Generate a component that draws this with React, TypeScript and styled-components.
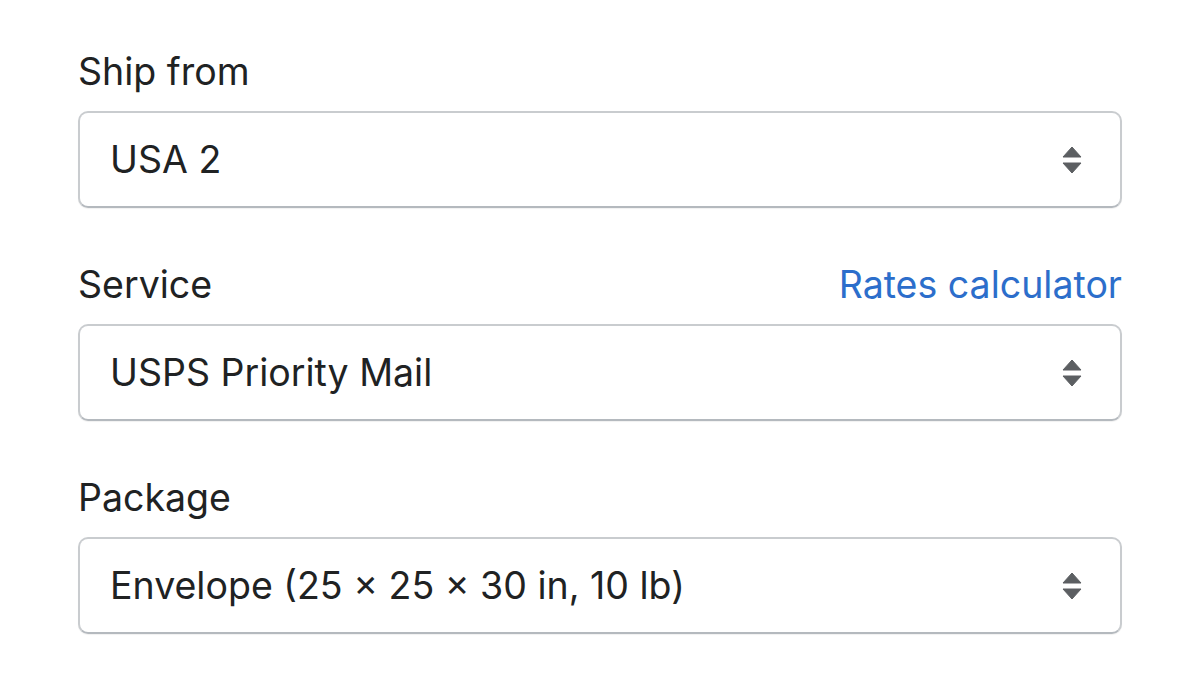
import React from 'react';
import styled, {createGlobalStyle} from "styled-components";

const GlobalStyle = createGlobalStyle`
    html, body {
        margin: 0;
        padding: 0;
        background: #ffffff;
    }
    body {
        font-family: Inter, "Noto Sans", "Liberation Sans", sans-serif;
        color: #202223;
    }
`

const Page = styled.div`
    width: 1200px;
    height: 675px;
    box-sizing: border-box;
    padding: 48px 78px 0 78px;
`

const Form = styled.div`
    display: flex;
    flex-direction: column;
    row-gap: 53px;
`

const Field = styled.div`
    display: flex;
    flex-direction: column;
    row-gap: 15px;
`

const LabelRow = styled.div`
    display: flex;
    justify-content: space-between;
    align-items: center;
    height: 48px;
`

const Label = styled.label`
    font-size: 37.5px;
    line-height: 48px;
    color: #202223;
`

const LinkButton = styled.a`
    font-size: 37.5px;
    line-height: 48px;
    color: #2c6ecb;
    text-decoration: none;
    cursor: pointer;
`

const SelectBox = styled.div`
    height: 97px;
    box-sizing: border-box;
    display: flex;
    align-items: center;
    justify-content: space-between;
    padding: 0 38px 0 30px;
    border: 2px solid #c9cccf;
    border-bottom-color: #b4b9be;
    border-radius: 10px;
    background: #ffffff;
    box-shadow: 0 1px 1px rgba(0, 0, 0, 0.06);
    cursor: pointer;
`

const Value = styled.span`
    font-size: 37.5px;
    color: #202223;
`

const ArrowsIcon = () => (
  <svg width="20" height="28" viewBox="0 0 20 28">
    <path d="M10 1 L19 11 L1 11 Z" fill="#5c5f62" stroke="#5c5f62" strokeWidth="1" strokeLinejoin="round"/>
    <path d="M10 27 L19 17 L1 17 Z" fill="#5c5f62" stroke="#5c5f62" strokeWidth="1" strokeLinejoin="round"/>
  </svg>
)

type SelectFieldProps = {
  label: string
  value: string
  action?: string
}

const SelectField = ({label, value, action}: SelectFieldProps) => {
  return (
    <Field>
      <LabelRow>
        <Label>{label}</Label>
        {action && <LinkButton>{action}</LinkButton>}
      </LabelRow>
      <SelectBox>
        <Value>{value}</Value>
        <ArrowsIcon/>
      </SelectBox>
    </Field>
  );
};

const App = () => {
  return (
    <>
      <GlobalStyle/>
      <Page>
        <Form>
          <SelectField label="Ship from" value="USA 2"/>
          <SelectField label="Service" value="USPS Priority Mail" action="Rates calculator"/>
          <SelectField label="Package" value="Envelope (25 × 25 × 30 in, 10 lb)"/>
        </Form>
      </Page>
    </>
  );
};

export default App;
